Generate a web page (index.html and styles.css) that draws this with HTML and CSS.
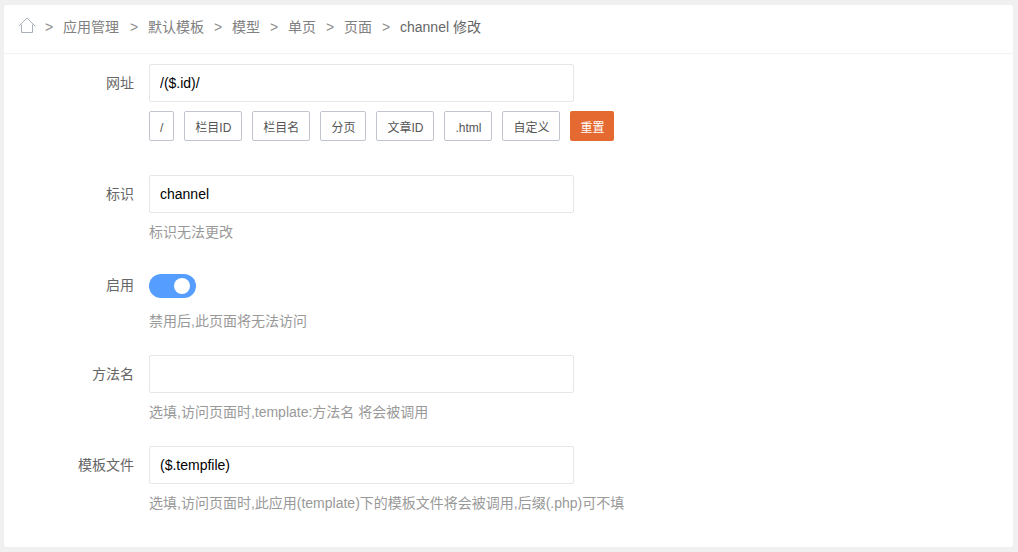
FILE: index.html
```html
<!DOCTYPE html>
<html lang="zh-CN">
<head>
<meta charset="utf-8">
<title>channel 修改</title>
<link rel="stylesheet" href="styles.css">
</head>
<body>
<main class="card">
  <nav class="crumbs">
    <svg class="home" width="18" height="17" viewBox="0 0 18 17" fill="none" stroke="#a9b0bb" stroke-width="1">
      <path d="M0.8 9.2 L9 0.9 L17.2 9.2"/>
      <path d="M3.5 7.5 V15.5 H14.5 V7.5"/>
    </svg>
    <span class="sep first">&gt;</span><a>应用管理</a>
    <span class="sep second">&gt;</span><a>默认模板</a>
    <span class="sep">&gt;</span><a>模型</a>
    <span class="sep">&gt;</span><a>单页</a>
    <span class="sep">&gt;</span><a>页面</a>
    <span class="sep">&gt;</span><a class="current">channel 修改</a>
  </nav>
  <form class="form">
    <div class="row row-url">
      <label class="label">网址</label>
      <div class="field">
        <input class="input" type="text" value="/($.id)/">
        <div class="btns">
          <button type="button" class="btn">/</button>
          <button type="button" class="btn">栏目ID</button>
          <button type="button" class="btn">栏目名</button>
          <button type="button" class="btn">分页</button>
          <button type="button" class="btn">文章ID</button>
          <button type="button" class="btn">.html</button>
          <button type="button" class="btn">自定义</button>
          <button type="button" class="btn btn-reset">重置</button>
        </div>
      </div>
    </div>
    <div class="row row-id">
      <label class="label">标识</label>
      <div class="field">
        <input class="input" type="text" value="channel">
        <p class="help">标识无法更改</p>
      </div>
    </div>
    <div class="row row-switch">
      <label class="label label-switch">启用</label>
      <div class="field">
        <div class="switch"><span class="knob"></span></div>
        <p class="help help-switch">禁用后,此页面将无法访问</p>
      </div>
    </div>
    <div class="row row-plain">
      <label class="label">方法名</label>
      <div class="field">
        <input class="input" type="text" value="">
        <p class="help">选填,访问页面时,template:方法名 将会被调用</p>
      </div>
    </div>
    <div class="row row-plain">
      <label class="label">模板文件</label>
      <div class="field">
        <input class="input" type="text" value="($.tempfile)">
        <p class="help">选填,访问页面时,此应用(template)下的模板文件将会被调用,后缀(.php)可不填</p>
      </div>
    </div>
  </form>
</main>
</body>
</html>
```
FILE: styles.css
```css
* {
  box-sizing: border-box;
}
html, body {
  margin: 0;
  height: 100%;
}
body {
  background: #f0f0f0;
  font-family: "Liberation Sans", "Noto Sans CJK SC", sans-serif;
  font-size: 14px;
  padding: 5px 5px 5px 4px;
  overflow: hidden;
}
.card {
  background: #fff;
  border-radius: 3px;
  height: 542px;
}
.crumbs {
  display: flex;
  align-items: center;
  height: 49px;
  padding: 0 0 4px 15px;
  border-bottom: 1px solid #f2f2f2;
  color: #808080;
  line-height: 20px;
}
.home {
  margin: -4px 1px 0 -1px;
  flex: none;
}
.sep {
  width: 8px;
  margin: 0 10px;
  color: #8f8f8f;
}
.sep.first {
  margin-left: 8px;
}
.sep.second {
  margin-left: 11px;
}
.current {
  color: #666;
}
.form {
  padding-top: 10px;
}
.row {
  display: flex;
  align-items: flex-start;
}
.row-id {
  margin-top: 34px;
}
.row-switch {
  margin-top: 32px;
}
.row-plain {
  margin-top: 24px;
}
.label {
  width: 130px;
  margin-right: 15px;
  text-align: right;
  line-height: 38px;
  color: #666;
}
.label-switch {
  line-height: 22px;
}
.field {
  width: 425px;
}
.input {
  display: block;
  width: 425px;
  height: 38px;
  padding: 0 10px;
  border: 1px solid #e6e6e6;
  border-radius: 2px;
  background: #fff;
  color: #000;
  font: inherit;
  outline: none;
}
.btns {
  display: flex;
  gap: 10px;
  margin-top: 9px;
  width: 480px;
}
.btn {
  height: 30px;
  padding: 4px 10px 0;
  border: 1px solid #c0c4cc;
  border-radius: 2px;
  background: #fff;
  color: #555;
  font: inherit;
  font-size: 12px;
  line-height: 24px;
  white-space: nowrap;
}
.btn-reset {
  border: 0;
  background: #e56a32;
  color: #fff;
}
.help {
  margin: 9px 0 0;
  line-height: 20px;
  color: #999;
  white-space: nowrap;
}
.help-switch {
  margin-top: 13px;
}
.switch {
  position: relative;
  width: 47px;
  height: 24px;
  border-radius: 12px;
  background: #559dff;
}
.knob {
  position: absolute;
  top: 4px;
  right: 6px;
  width: 16px;
  height: 16px;
  border-radius: 50%;
  background: #fff;
}
```
